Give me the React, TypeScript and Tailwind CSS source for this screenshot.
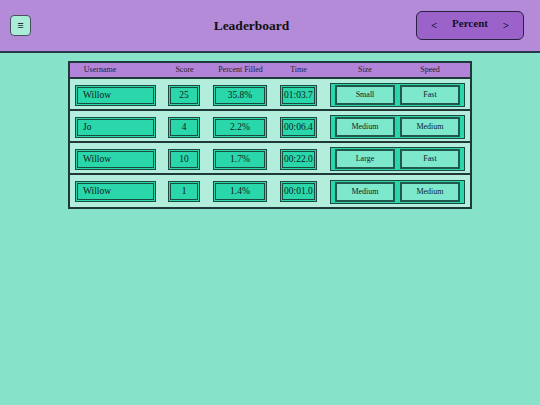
import React from "react";

type Row = { name: string; score: string; pct: string; time: string; size: string; speed: string };

const rows: Row[] = [
  { name: "Willow", score: "25", pct: "35.8%", time: "01:03.7", size: "Small", speed: "Fast" },
  { name: "Jo", score: "4", pct: "2.2%", time: "00:06.4", size: "Medium", speed: "Medium" },
  { name: "Willow", score: "10", pct: "1.7%", time: "00:22.0", size: "Large", speed: "Fast" },
  { name: "Willow", score: "1", pct: "1.4%", time: "00:01.0", size: "Medium", speed: "Medium" },
];

const serif = { fontFamily: '"Liberation Serif", "Times New Roman", serif' };

export default function App() {
  return (
    <div className="w-[540px] h-[405px] bg-[#86e3c9] text-[#10201c]" style={serif}>
      <header className="h-[53px] bg-[#b48bd8] border-b-2 border-[#27384a] flex items-center justify-between pl-[10px] pr-[16px]">
        <button className="w-[21px] h-[21px] rounded-[4px] border border-[#4a4f60] bg-[#a9ecd7] flex items-center justify-center text-[11px] font-bold leading-none text-[#1d2a2a]">
          ≡
        </button>
        <h1 className="font-bold text-[13.5px] text-[#111] ml-[56px] mt-[2px]">Leaderboard</h1>
        <button className="w-[108px] h-[29px] rounded-[6px] border border-[#2a2040] bg-[#9b63c9] flex items-center justify-between px-[14px] text-[11px] font-bold text-[#16102a] -mt-[1px]">
          <span>&lt;</span>
          <span className="-mt-[3px]">Percent</span>
          <span>&gt;</span>
        </button>
      </header>

      <div className="mt-[8px] mx-auto w-[404px] border-2 border-[#1f3838]">
        <div className="h-[16px] bg-[#b184d9] border-b-2 border-[#1f3838] flex items-center text-[8px] text-[#1e1e2a]">
          <div className="w-[60px] text-center">Username</div>
          <div className="ml-[32px] w-[45px] text-center">Score</div>
          <div className="ml-[3px] w-[61px] text-center">Percent Filled</div>
          <div className="ml-[4px] w-[47px] text-center">Time</div>
          <div className="ml-[13px] w-[60px] text-center">Size</div>
          <div className="ml-[5px] w-[60px] text-center">Speed</div>
        </div>
        {rows.map((r, i) => (
          <div
            key={i}
            className={`h-[32px] bg-[#b3eedd] flex items-center pl-[5px] ${i < rows.length - 1 ? "border-b-2 border-[#1f3838] pt-[2px]" : "pt-[1px]"}`}
          >
            <div className="w-[81px] h-[21px] border-[3px] border-double border-[#1d4a40] bg-[#2ad7ab] flex items-center pl-[5px] text-[9.5px]">
              {r.name}
            </div>
            <div className="ml-[12px] w-[32px] h-[21px] border-[3px] border-double border-[#1d4a40] bg-[#2ad7ab] flex items-center justify-center text-[9.5px]">
              {r.score}
            </div>
            <div className="ml-[13px] w-[54px] h-[21px] border-[3px] border-double border-[#1d4a40] bg-[#2ad7ab] flex items-center justify-center text-[9.5px]">
              {r.pct}
            </div>
            <div className="ml-[13px] w-[37px] h-[21px] border-[3px] border-double border-[#1d4a40] bg-[#2ad7ab] flex items-center justify-center text-[9.5px] whitespace-nowrap overflow-visible">
              {r.time}
            </div>
            <div className="ml-[13px] w-[135px] h-[24px] border border-[#1d4a40] bg-[#2ad7ab] flex items-center pl-[4px] gap-[5px]">
              <div className="w-[60px] h-[20px] border-2 border-[#24574c] bg-[#7ee8cc] flex items-center justify-center text-[8px]">
                {r.size}
              </div>
              <div className="w-[60px] h-[20px] border-2 border-[#24574c] bg-[#7ee8cc] flex items-center justify-center text-[8px]">
                {r.speed}
              </div>
            </div>
          </div>
        ))}
      </div>
    </div>
  );
}
